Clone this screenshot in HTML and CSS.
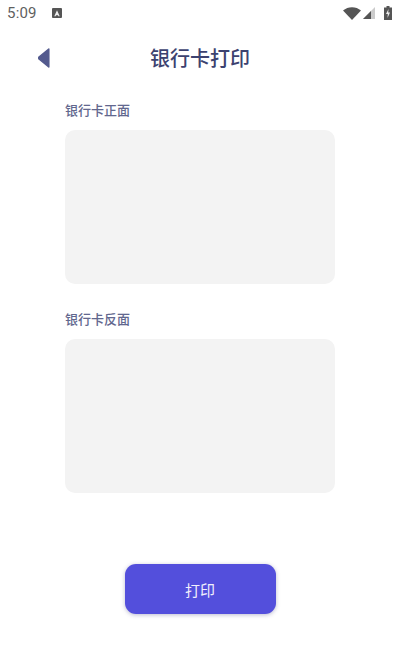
FILE: index.html
```html
<!DOCTYPE html>
<html lang="zh-CN">
<head>
<meta charset="utf-8">
<title>银行卡打印</title>
<link rel="stylesheet" href="styles.css">
</head>
<body>
<div class="status">
  <span class="time">5:09</span>
  <svg class="ic-a" viewBox="0 0 11 11"><rect width="11" height="11" rx="1" fill="#555"/><path d="M2.500 9 5.500 2.500 8.500 9H7L6.600 8H4.400L4 9Z" fill="#eee"/></svg>
  <span class="spacer"></span>
  <svg class="ic-wifi" viewBox="0 0 18 13"><path d="M0 3.500C5 -1 13 -1 18 3.500L9 13Z" fill="#555"/></svg>
  <svg class="ic-signal" viewBox="0 0 12 12"><path d="M12 0V12H0Z" fill="#ccc"/><path d="M8 4V12H0Z" fill="#555"/></svg>
  <svg class="ic-batt" viewBox="0 0 8 14"><path d="M2.500 0H5.500V1.500H8V14H0V1.500H2.500Z" fill="#555"/><path d="M4.500 3 2 8H3.800L3.500 12 6 6.500H4.200Z" fill="#eee"/></svg>
</div>
<header class="nav">
  <svg class="back" viewBox="0 0 12 20"><path d="M10.800 1V19L1 11Q.4 10 1 9Z" fill="#535a8e" stroke="#535a8e" stroke-width="1.500" stroke-linejoin="round"/></svg>
  <h1 class="title">银行卡打印</h1>
</header>
<main class="content">
  <section class="card-block">
    <h2 class="label">银行卡正面</h2>
    <div class="slot"></div>
  </section>
  <section class="card-block">
    <h2 class="label">银行卡反面</h2>
    <div class="slot"></div>
  </section>
</main>
<div class="actions"><button class="print">打印</button></div>
</body>
</html>
```

FILE: styles.css
```css
* { box-sizing: border-box; }
html, body { margin: 0; padding: 0; }
body {
  width: 400px;
  height: 666px;
  overflow: hidden;
  background: #fff;
  font-family: "Noto Sans CJK SC", "Noto Sans", sans-serif;
  display: flex;
  flex-direction: column;
}
.status {
  height: 26px;
  display: flex;
  align-items: center;
  padding: 0 8px 0 7px;
  flex: none;
}
.time { font-family: Roboto, sans-serif; font-size: 15px; color: #5f5f5f; width: 45px; letter-spacing: .2px; }
.spacer { flex: 1; }
.ic-a { width: 10px; height: 10px; }
.ic-wifi { width: 18px; height: 13px; }
.ic-signal { width: 12px; height: 12px; margin-left: 2px; }
.ic-batt { width: 8px; height: 14px; margin-left: 9px; }
.nav {
  height: 60px;
  flex: none;
  position: relative;
  display: flex;
  align-items: center;
  justify-content: center;
}
.back { position: absolute; left: 38px; top: 22px; width: 12px; height: 20px; }
.title { margin: 0; font-size: 20px; font-weight: 500; color: #3c4270; line-height: 26px; position: relative; top: 2px; }
.content {
  padding: 14px 65px 0;
  display: flex;
  flex-direction: column;
  gap: 25px;
  flex: none;
}
.label { margin: 0 0 10px; font-size: 13px; font-weight: 500; color: #62678e; line-height: 20px; }
.slot { height: 154px; background: #f3f3f3; border-radius: 10px; }
.actions { display: flex; justify-content: center; margin-top: 71px; flex: none; }
.print {
  width: 151px;
  height: 50px;
  border: 0;
  border-radius: 11px;
  background: #534fdc;
  color: #f1effc;
  font-family: inherit;
  font-size: 15px;
  box-shadow: 0 1px 4px rgba(60,60,120,.35);
}
```
